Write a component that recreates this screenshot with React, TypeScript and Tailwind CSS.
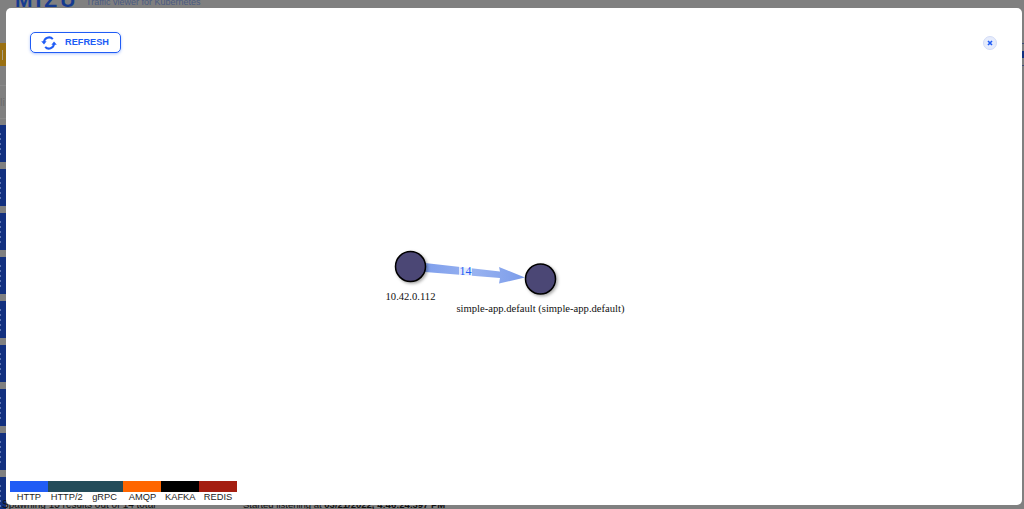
import React from "react";

const legend = [
  { label: "HTTP", color: "bg-[#205cf5]" },
  { label: "HTTP/2", color: "bg-[#244c5a]" },
  { label: "gRPC", color: "bg-[#244c5a]" },
  { label: "AMQP", color: "bg-[#ff6600]" },
  { label: "KAFKA", color: "bg-[#000000]" },
  { label: "REDIS", color: "bg-[#a41e11]" },
];

const rows = [0, 1, 2, 3, 4, 5, 6, 7, 8];
const dots = [0, 1, 2, 3, 4];

function RefreshIcon() {
  return (
    <svg width="16" height="14" viewBox="0 0 16 14" fill="none" stroke="#205cf5" strokeWidth="2">
      <path d="M3 6.2A5 5 0 0 1 11.8 3.2" />
      <path d="M13 7.8A5 5 0 0 1 4.2 10.8" />
      <path d="M0.2 5.2h5.4L3 8.4z" fill="#205cf5" stroke="none" />
      <path d="M10.4 8.8h5.4L13 5.6z" fill="#205cf5" stroke="none" />
    </svg>
  );
}

function Graph() {
  return (
    <svg width="1016" height="320" viewBox="0 0 1016 320" className="block">
      <defs>
        <filter id="s" x="-40%" y="-40%" width="180%" height="180%">
          <feDropShadow dx="1.5" dy="1.5" stdDeviation="1.5" floodColor="#000" floodOpacity="0.35" />
        </filter>
        <filter id="b" x="-5%" y="-30%" width="110%" height="160%">
          <feGaussianBlur stdDeviation="0.5" />
        </filter>
        <linearGradient id="g" x1="0" x2="1" y1="0" y2="0">
          <stop offset="0" stopColor="#7f9fec" />
          <stop offset="0.5" stopColor="#98b2f0" />
          <stop offset="1" stopColor="#7b9cea" />
        </linearGradient>
      </defs>
      <g transform="translate(-6 -192)">
        <path d="M425 263 L500 271.5 L499 267 L525 277.5 L499 283.5 L500 278 L425 272 Z" fill="url(#g)" filter="url(#b)" />
        <rect x="459" y="265" width="13" height="12" fill="#ffffff" fillOpacity="0.75" />
        <text x="465.5" y="275" textAnchor="middle" fontFamily="'Liberation Serif', serif" fontSize="12" fill="#205cf5">14</text>
        <circle cx="410.5" cy="266.5" r="15" fill="#4b4675" stroke="#000" strokeWidth="1.5" filter="url(#s)" />
        <circle cx="540.5" cy="279" r="15" fill="#4b4675" stroke="#000" strokeWidth="1.5" filter="url(#s)" />
        <text x="410.5" y="300" textAnchor="middle" fontFamily="'Liberation Serif', serif" fontSize="10.6" fill="#111">10.42.0.112</text>
        <text x="540.5" y="312" textAnchor="middle" fontFamily="'Liberation Serif', serif" fontSize="10.6" fill="#111">simple-app.default (simple-app.default)</text>
      </g>
    </svg>
  );
}

export default function App() {
  return (
    <div className="relative h-[509px] w-[1024px] overflow-hidden bg-[#808080] font-['Liberation_Sans',sans-serif]">
      {/* page dimmed behind the dialog */}
      <div className="flex h-[8px] items-end overflow-hidden pl-[15px]">
        <span className="mb-[-2px] w-[71px] text-[21px] font-bold leading-[21px] tracking-[3px] text-[#153a8f]">MIZU</span>
        <span className="text-[9px] leading-[11px] text-[#4a5a80]">Traffic viewer for Kubernetes</span>
      </div>
      <div className="flex flex-col gap-[7px] pt-[117px]">
        {rows.map((r) => (
          <div key={r} className="flex h-[37px] w-[6px] flex-col justify-center gap-[3px] bg-[#12307f]">
            {dots.map((d) => (
              <div key={d} className="h-[2px] w-[1px] bg-[#5d74b0]" />
            ))}
          </div>
        ))}
      </div>
      <div className="absolute left-0 top-[43px] flex h-[23px] w-[6px] items-center bg-[#9a7012] pl-[2px]">
        <div className="h-[10px] w-[1px] bg-[#a9a08a]" />
      </div>
      <div className="absolute left-0 top-[85px] w-[6px] overflow-hidden border-y border-[#8a8a8a] text-[11px] leading-[32px] text-[#6b6b6b]">
        li
      </div>
      <div className="absolute right-0 top-[43px] flex h-[23px] w-[2px] flex-col justify-center border-y border-[#3d4c78]">
        <div className="h-[7px] bg-[#12307f]" />
      </div>
      <div className="absolute left-[2px] top-[499px] flex text-[10px] leading-[12px] text-[#111]">
        <span className="w-[241px]">Spawning 13 results out of 14 total</span>
        <span className="text-[9.5px]">
          Started listening at <b>03/21/2022, 4:46:24.397 PM</b>
        </span>
      </div>

      {/* dialog */}
      <div className="absolute left-[6px] top-[8px] flex h-[497px] w-[1016px] flex-col rounded-[5px] bg-white">
        <div className="flex h-[50px] items-start justify-between pl-[24px] pr-[25px] pt-[24px]">
          <button className="flex h-[21px] w-[91px] items-center gap-[8px] rounded-[5px] border border-[#205cf5] pl-[10px] text-[9.2px] font-bold text-[#205cf5] shadow-[0_1px_3px_rgba(32,92,245,0.35)]">
            <RefreshIcon />
            REFRESH
          </button>
          <div className="mt-[4px] flex h-[14px] w-[14px] items-center justify-center rounded-full border border-[#d3dcf7] bg-[#e6ecfc]">
            <svg width="6" height="6" viewBox="0 0 6 6" stroke="#205cf5" strokeWidth="1.6">
              <path d="M1 1L5 5M5 1L1 5" />
            </svg>
          </div>
        </div>
        <div className="flex-1 overflow-hidden pt-[134px]">
          <Graph />
        </div>
        <div className="absolute bottom-[3px] left-[4px] grid w-[227px] grid-cols-6">
          {legend.map((l) => (
            <div key={l.label} className="flex flex-col items-center">
              <div className={`h-[11px] w-full ${l.color}`} />
              <span className="mt-[1px] text-[9.3px] leading-[9px] text-[#222]">{l.label}</span>
            </div>
          ))}
        </div>
      </div>
    </div>
  );
}
